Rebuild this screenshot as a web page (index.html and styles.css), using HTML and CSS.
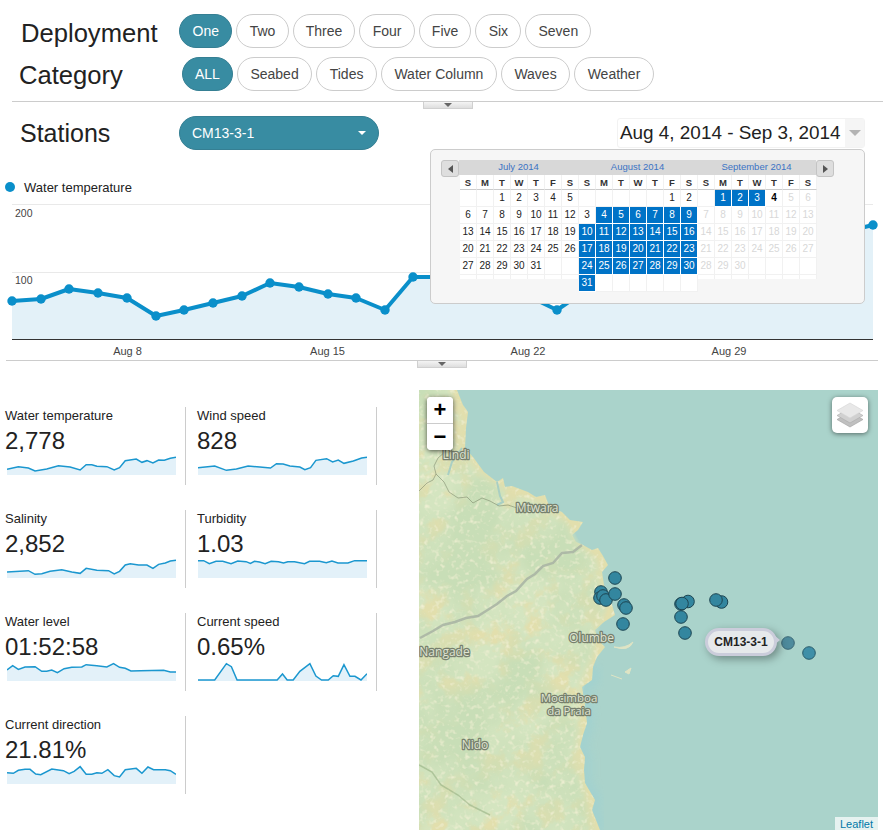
FILE: index.html
```html
<!DOCTYPE html>
<html lang="en">
<head>
<meta charset="utf-8">
<title>Deployment dashboard</title>
<link rel="stylesheet" href="styles.css">
</head>
<body>
<header class="filters">
  <div class="filter-row row-deploy">
    <h2 class="label label-deploy">Deployment</h2>
    <div class="pills">
      <button class="pill active">One</button><button class="pill">Two</button><button class="pill">Three</button><button class="pill">Four</button><button class="pill">Five</button><button class="pill">Six</button><button class="pill">Seven</button>
    </div>
  </div>
  <div class="filter-row row-cat">
    <h2 class="label label-cat">Category</h2>
    <div class="pills">
      <button class="pill active">ALL</button><button class="pill">Seabed</button><button class="pill">Tides</button><button class="pill">Water Column</button><button class="pill">Waves</button><button class="pill">Weather</button>
    </div>
  </div>
</header>
<div class="rule rule-top"></div>
<div class="handle handle-top"><i></i></div>
<section class="stations">
  <h2 class="label label-stations">Stations</h2>
  <div class="select"><span>CM13-3-1</span><i></i></div>
  <div class="range"><span>Aug 4, 2014 - Sep 3, 2014</span><b><i></i></b></div>
  <div class="calendar">
    <div class="cal-head">
      <div class="nav"><i class="left"></i></div>
      <div class="cal-titles"><span>July 2014</span><span>August 2014</span><span>September 2014</span></div>
      <div class="nav"><i class="right"></i></div>
    </div>
    <div class="cal-months">
      <div class="month">
        <div class="dn">S</div><div class="dn">M</div><div class="dn">T</div><div class="dn">W</div><div class="dn">T</div><div class="dn">F</div><div class="dn">S</div>
        <div class="d"></div><div class="d"></div><div class="d">1</div><div class="d">2</div><div class="d">3</div><div class="d">4</div><div class="d">5</div>
        <div class="d">6</div><div class="d">7</div><div class="d">8</div><div class="d">9</div><div class="d">10</div><div class="d">11</div><div class="d">12</div>
        <div class="d">13</div><div class="d">14</div><div class="d">15</div><div class="d">16</div><div class="d">17</div><div class="d">18</div><div class="d">19</div>
        <div class="d">20</div><div class="d">21</div><div class="d">22</div><div class="d">23</div><div class="d">24</div><div class="d">25</div><div class="d">26</div>
        <div class="d">27</div><div class="d">28</div><div class="d">29</div><div class="d">30</div><div class="d">31</div><div class="d"></div><div class="d"></div>
        <div class="d stub"></div><div class="d stub"></div><div class="d stub"></div><div class="d stub"></div><div class="d stub"></div><div class="d stub"></div><div class="d stub"></div>
      </div>
      <div class="month">
        <div class="dn">S</div><div class="dn">M</div><div class="dn">T</div><div class="dn">W</div><div class="dn">T</div><div class="dn">F</div><div class="dn">S</div>
        <div class="d"></div><div class="d"></div><div class="d"></div><div class="d"></div><div class="d"></div><div class="d">1</div><div class="d">2</div>
        <div class="d">3</div><div class="d on">4</div><div class="d on">5</div><div class="d on">6</div><div class="d on">7</div><div class="d on">8</div><div class="d on">9</div>
        <div class="d on">10</div><div class="d on">11</div><div class="d on">12</div><div class="d on">13</div><div class="d on">14</div><div class="d on">15</div><div class="d on">16</div>
        <div class="d on">17</div><div class="d on">18</div><div class="d on">19</div><div class="d on">20</div><div class="d on">21</div><div class="d on">22</div><div class="d on">23</div>
        <div class="d on">24</div><div class="d on">25</div><div class="d on">26</div><div class="d on">27</div><div class="d on">28</div><div class="d on">29</div><div class="d on">30</div>
        <div class="d on">31</div><div class="d"></div><div class="d"></div><div class="d"></div><div class="d"></div><div class="d"></div><div class="d"></div>
      </div>
      <div class="month">
        <div class="dn">S</div><div class="dn">M</div><div class="dn">T</div><div class="dn">W</div><div class="dn">T</div><div class="dn">F</div><div class="dn">S</div>
        <div class="d"></div><div class="d on">1</div><div class="d on">2</div><div class="d on">3</div><div class="d today">4</div><div class="d off">5</div><div class="d off">6</div>
        <div class="d off">7</div><div class="d off">8</div><div class="d off">9</div><div class="d off">10</div><div class="d off">11</div><div class="d off">12</div><div class="d off">13</div>
        <div class="d off">14</div><div class="d off">15</div><div class="d off">16</div><div class="d off">17</div><div class="d off">18</div><div class="d off">19</div><div class="d off">20</div>
        <div class="d off">21</div><div class="d off">22</div><div class="d off">23</div><div class="d off">24</div><div class="d off">25</div><div class="d off">26</div><div class="d off">27</div>
        <div class="d off">28</div><div class="d off">29</div><div class="d off">30</div><div class="d"></div><div class="d"></div><div class="d"></div><div class="d"></div>
        <div class="d stub"></div><div class="d stub"></div><div class="d stub"></div><div class="d stub"></div><div class="d stub"></div><div class="d stub"></div><div class="d stub"></div>
      </div>
    </div>
  </div>
</section>
<div class="legend"><i></i><span>Water temperature</span></div>
<svg class="chart" viewBox="0 196 889 164" width="889" height="164" role="img" aria-label="Water temperature chart">
  <line class="grid" x1="12" y1="204.5" x2="873" y2="204.5"/>
  <line class="grid" x1="12" y1="272.5" x2="873" y2="272.5"/>
  <path class="chart-area" d="M12 301L41 299L69 289L98 293L127 298L156 316L184 310L213 303L242 296L270 283L299 287L328 294L356 298L385 310L413 277L442 277L471 285L500 292L528 296L557 310L586 290L614 286L643 275L672 268L700 262L729 258L758 250L786 245L815 240L844 232L873 225L873 339L12 339Z"/>
  <path class="chart-line" d="M12 301L41 299L69 289L98 293L127 298L156 316L184 310L213 303L242 296L270 283L299 287L328 294L356 298L385 310L413 277L442 277L471 285L500 292L528 296L557 310L586 290L614 286L643 275L672 268L700 262L729 258L758 250L786 245L815 240L844 232L873 225"/>
  <g class="chart-dots">
    <circle cx="12" cy="301" r="4.700"/><circle cx="41" cy="299" r="4.700"/><circle cx="69" cy="289" r="4.700"/><circle cx="98" cy="293" r="4.700"/><circle cx="127" cy="298" r="4.700"/><circle cx="156" cy="316" r="4.700"/><circle cx="184" cy="310" r="4.700"/><circle cx="213" cy="303" r="4.700"/><circle cx="242" cy="296" r="4.700"/><circle cx="270" cy="283" r="4.700"/><circle cx="299" cy="287" r="4.700"/><circle cx="328" cy="294" r="4.700"/><circle cx="356" cy="298" r="4.700"/><circle cx="385" cy="310" r="4.700"/><circle cx="413" cy="277" r="4.700"/><circle cx="557" cy="310" r="4.700"/><circle cx="873" cy="225" r="4.700"/>
  </g>
  <line class="axis" x1="12" y1="339.5" x2="873" y2="339.5"/>
  <text class="tick" x="15" y="217">200</text>
  <text class="tick" x="15" y="284">100</text>
  <text class="tick tick-x mid" x="127.500" y="354.500">Aug 8</text>
  <text class="tick tick-x mid" x="327.500" y="354.500">Aug 15</text>
  <text class="tick tick-x mid" x="528" y="354.500">Aug 22</text>
  <text class="tick tick-x mid" x="729" y="354.500">Aug 29</text>
</svg>
<div class="rule rule-mid"></div>
<div class="handle handle-mid"><i></i></div>
<main class="lower">
  <div class="metrics">
    <article class="tile">
      <h3>Water temperature</h3><p>2,778</p>
      <svg class="spark" viewBox="21 180 506 60" preserveAspectRatio="none"><path class="spark-area" d="M21 223L55 215L85 219L105 228L140 222L175 212L210 216L240 225L258 209L275 209L290 214L320 215L342 225L358 218L375 197L408 192L425 202L440 197L458 204L475 195L492 196L510 190L527 187L527 240L21 240Z"/><path class="spark-line" d="M21 223L55 215L85 219L105 228L140 222L175 212L210 216L240 225L258 209L275 209L290 214L320 215L342 225L358 218L375 197L408 192L425 202L440 197L458 204L475 195L492 196L510 190L527 187"/></svg>
    </article>
    <article class="tile">
      <h3>Wind speed</h3><p>828</p>
      <svg class="spark" viewBox="21 180 506 60" preserveAspectRatio="none"><path class="spark-area" d="M21 218L71 213L106 226L136 222L171 213L206 216L238 219L256 206L276 207L296 213L326 216L341 224L358 218L374 196L406 191L424 201L441 195L458 205L486 198L511 189L527 187L527 240L21 240Z"/><path class="spark-line" d="M21 218L71 213L106 226L136 222L171 213L206 216L238 219L256 206L276 207L296 213L326 216L341 224L358 218L374 196L406 191L424 201L441 195L458 205L486 198L511 189L527 187"/></svg>
    </article>
    <article class="tile">
      <h3>Salinity</h3><p>2,852</p>
      <svg class="spark" viewBox="21 180 506 60" preserveAspectRatio="none"><path class="spark-area" d="M21 222L85 218L105 229L125 227L150 220L185 215L215 222L240 226L258 211L290 217L325 218L342 228L358 220L375 201L390 197L415 201L440 201L458 211L475 199L495 195L510 189L527 187L527 240L21 240Z"/><path class="spark-line" d="M21 222L85 218L105 229L125 227L150 220L185 215L215 222L240 226L258 211L290 217L325 218L342 228L358 220L375 201L390 197L415 201L440 201L458 211L475 199L495 195L510 189L527 187"/></svg>
    </article>
    <article class="tile">
      <h3>Turbidity</h3><p>1.03</p>
      <svg class="spark" viewBox="21 180 506 60" preserveAspectRatio="none"><path class="spark-area" d="M21 188L38 188L55 197L75 190L95 190L120 197L140 189L165 191L178 196L190 190L205 192L222 197L240 190L262 191L277 195L290 191L310 191L340 197L355 190L385 190L405 194L422 189L440 195L470 195L490 188L527 188L527 240L21 240Z"/><path class="spark-line" d="M21 188L38 188L55 197L75 190L95 190L120 197L140 189L165 191L178 196L190 190L205 192L222 197L240 190L262 191L277 195L290 191L310 191L340 197L355 190L385 190L405 194L422 189L440 195L470 195L490 188L527 188"/></svg>
    </article>
    <article class="tile">
      <h3>Water level</h3><p>01:52:58</p>
      <svg class="spark" viewBox="21 180 506 60" preserveAspectRatio="none"><path class="spark-area" d="M21 207L38 194L55 205L75 198L105 197L125 211L140 211L155 207L172 215L192 203L215 199L245 198L258 191L290 194L320 198L340 188L358 199L375 202L392 210L420 209L490 208L510 213L527 213L527 240L21 240Z"/><path class="spark-line" d="M21 207L38 194L55 205L75 198L105 197L125 211L140 211L155 207L172 215L192 203L215 199L245 198L258 191L290 194L320 198L340 188L358 199L375 202L392 210L420 209L490 208L510 213L527 213"/></svg>
    </article>
    <article class="tile">
      <h3>Current speed</h3><p>0.65%</p>
      <svg class="spark" viewBox="21 180 506 60" preserveAspectRatio="none"><path class="spark-area" d="M21 237L71 237L106 188L121 197L138 237L258 237L274 219L288 237L306 237L326 211L356 188L374 225L391 237L411 237L426 224L441 226L458 191L476 226L491 226L509 237L527 218L527 240L21 240Z"/><path class="spark-line" d="M21 237L71 237L106 188L121 197L138 237L258 237L274 219L288 237L306 237L326 211L356 188L374 225L391 237L411 237L426 224L441 226L458 191L476 226L491 226L509 237L527 218"/></svg>
    </article>
    <article class="tile">
      <h3>Current direction</h3><p>21.81%</p>
      <svg class="spark" viewBox="21 180 506 60" preserveAspectRatio="none"><path class="spark-area" d="M21 206L40 208L55 199L75 196L90 196L107 210L122 212L155 195L190 200L207 209L222 202L240 188L258 211L275 211L290 206L305 208L323 197L342 215L358 219L375 197L408 193L425 208L443 189L460 197L495 197L510 200L527 211L527 240L21 240Z"/><path class="spark-line" d="M21 206L40 208L55 199L75 196L90 196L107 210L122 212L155 195L190 200L207 209L222 202L240 188L258 211L275 211L290 206L305 208L323 197L342 215L358 219L375 197L408 193L425 208L443 189L460 197L495 197L510 200L527 211"/></svg>
    </article>
  </div>
  <div class="map">
    <svg class="map-canvas" viewBox="419 390 459 440" width="459" height="440" role="img" aria-label="Map of stations">
      <defs>
        <filter id="terrain" filterUnits="userSpaceOnUse" x="300" y="290" width="400" height="660">
          <feGaussianBlur in="SourceAlpha" stdDeviation="11" result="blurred"/>
          <feColorMatrix in="blurred" values="0 0 0 0 0  0 0 0 0 0  0 0 0 0 0  0 0 0 3.2 -1.75" result="inland"/>
          <feTurbulence type="fractalNoise" baseFrequency="0.04" numOctaves="5" seed="4" result="noiseA"/>
          <feColorMatrix in="noiseA" values="0 0 0 0 0.66  0 0 0 0 0.78  0 0 0 0 0.53  5.5 0 0 0 -1.9" result="green"/>
          <feComposite in="green" in2="inland" operator="in" result="greenInland"/>
          <feTurbulence type="fractalNoise" baseFrequency="0.012" numOctaves="4" seed="19" result="noiseB"/>
          <feColorMatrix in="noiseB" values="0 0 0 0 0.58  0 0 0 0 0.73  0 0 0 0 0.47  4 0 0 0 -1.6" result="deep"/>
          <feComposite in="deep" in2="inland" operator="in" result="deepInland"/>
          <feTurbulence type="fractalNoise" baseFrequency="0.2" numOctaves="2" seed="7" result="noiseC"/>
          <feColorMatrix in="noiseC" values="0 0 0 0 0.88  0 0 0 0 0.87  0 0 0 0 0.66  2.5 0 0 0 -1.35" result="speck"/>
          <feComposite in="speck" in2="SourceAlpha" operator="in" result="speckLand"/>
          <feMerge><feMergeNode in="SourceGraphic"/><feMergeNode in="greenInland"/><feMergeNode in="deepInland"/><feMergeNode in="speckLand"/></feMerge>
        </filter>
        <filter id="soft" x="-20%" y="-20%" width="140%" height="140%"><feGaussianBlur stdDeviation="4"/></filter>
      </defs>
      <rect class="sea" x="419" y="390" width="459" height="440"/>
      <path class="shallow" filter="url(#soft)" d="M593 667L592 680L582 687L587 723L580 747L585 757L585 783L595 800L592 810L600 830"/>
      <path class="land" filter="url(#terrain)" d="M300 290L445 290L457 390L463 405L468 412L466 428L465 448L473 457L484 472L497 482L503 478L505 487L512 486L528 492L536 497L545 495L548 503L552 508L562 512L570 520L583 522L578 530L572 535L576 542L583 545L592 550L598 548L603 556L608 565L602 572L604 585L612 605L615 615L604 622L595 630L598 640L605 647L597 657L593 667L592 680L582 687L585 705L587 723L583 735L580 747L585 757L584 770L585 783L595 800L592 810L600 830L602 950L300 950Z"/>
      <path class="lagoon" d="M497 482L500 496L503 502L497 505M462 448L452 462L448 475"/>
      <path class="river" d="M582 545L573 552L562 553L553 563L543 566L535 574L527 579L516 591L507 596L497 604L486 611L478 616L466 618L455 622L443 625L433 631L420 638"/>
      <path class="border" d="M419 491L427 483L433 480L436 474L444 482L449 492L458 498L467 497L473 503L482 498L490 501L499 506L508 505L520 509L530 507"/>
      <path class="border" d="M436 474L434 466L438 458L445 452L448 442"/>
      <path class="ridge" d="M419 765L432 772L441 785L458 795L470 805L490 815"/>
      <path class="island" d="M614 647Q625 649 633 642Q629 652 614 647ZM611 675L622 679M625 672L631 668L629 674Z"/>
      <text class="place" x="456" y="459">Lindi</text>
      <text class="place" x="537" y="512">Mtwara</text>
      <text class="place" x="591.500" y="642">Olumbe</text>
      <text class="place" x="444.500" y="656">Nangade</text>
      <text class="place place-long" x="569" y="701.500">Mocimboa</text>
      <text class="place place-long" x="569" y="714.500">da Praia</text>
      <text class="place" x="475" y="749">Nido</text>
      <g class="markers">
        <circle cx="615" cy="578" r="6.300"/><circle cx="601" cy="592" r="6.300"/><circle cx="600" cy="598" r="6.300"/><circle cx="603" cy="596" r="6.300"/><circle cx="606" cy="600" r="6.300"/><circle cx="615" cy="594" r="6.300"/><circle cx="624" cy="605" r="6.300"/><circle cx="626" cy="608" r="6.300"/><circle cx="623" cy="624" r="6.300"/><circle cx="688" cy="601.500" r="6.300"/><circle cx="681" cy="604" r="6.300"/><circle cx="682" cy="603.500" r="6.300"/><circle cx="681" cy="617" r="6.300"/><circle cx="685" cy="633" r="6.300"/><circle cx="721.500" cy="602" r="6.300"/><circle cx="716" cy="600" r="6.300"/><circle class="dim" cx="788" cy="643" r="6.300"/><circle class="dim2" cx="809" cy="653" r="6.300"/>
      </g>
    </svg>
    <div class="zoom">
      <button>+</button>
      <button>&#8722;</button>
    </div>
    <div class="layers">
      <svg viewBox="0 0 26 26" width="26" height="26">
        <path class="layer-low" d="M13 10L26 17.500L13 25L0 17.500Z"/>
        <path class="layer-mid" d="M13 6L26 13.500L13 21L0 13.500Z"/>
        <path class="layer-top" d="M13 1L26 8.500L13 16L0 8.500Z"/>
      </svg>
    </div>
    <div class="tip">CM13-3-1</div>
    <div class="attr">Leaflet</div>
  </div>
</main>
</body>
</html>
```
FILE: styles.css
```css
* { box-sizing: border-box; }
html, body { margin: 0; padding: 0; }
body {
  width: 889px;
  height: 840px;
  overflow: hidden;
  background: #fff;
  color: #222;
  font-family: "Liberation Sans", Arial, sans-serif;
}
.filters { display: flex; flex-direction: column; }
.filter-row { display: flex; align-items: center; height: 34px; }
.row-deploy { margin-top: 14px; }
.row-cat { margin-top: 9px; }
.label { margin: 0; font-weight: 400; font-size: 25.6px; line-height: 34px; color: #222; }
.label-deploy { padding: 3px 0 0 21px; width: 179px; }
.label-cat { padding: 2px 0 0 19px; width: 182px; }
.label-stations { padding: 0 0 0 20px; width: 179px; font-size: 25px; }
.pills { display: flex; gap: 4px; }
.pill {
  height: 34px;
  padding: 0 12.5px;
  background: #fff;
  border: 1px solid #ccc;
  border-radius: 17px;
  font: 14px/20px "Liberation Sans", Arial, sans-serif;
  color: #444;
}
.row-deploy .pill { padding: 0 12.2px; }
.pill.active, .row-deploy .pill.active {
  padding: 0 12.5px;
  background: #388ca2;
  border-color: #357f93;
  color: #fff;
}
.row-cat .pill.active { padding: 0 12px; }
.rule { height: 1px; background: #ccc; }
.rule-top { margin: 10px 6px 0 12px; }
.rule-mid { margin: 0 11px 0 6px; }
.handle {
  display: flex;
  justify-content: center;
  width: 50px;
  height: 7px;
  background: linear-gradient(#f4f4f4, #dedede);
  border: 1px solid #d0d0d0;
  border-top: 0;
}
.handle i {
  width: 0;
  height: 0;
  margin-top: 1px;
  border-left: 4px solid transparent;
  border-right: 4px solid transparent;
  border-top: 4px solid #666;
}
.handle-top { margin-left: 423px; }
.handle-mid { margin-left: 417px; }
.stations { position: relative; display: flex; align-items: flex-start; margin-top: 7px; height: 34px; }
.select {
  display: flex;
  align-items: center;
  justify-content: space-between;
  width: 200px;
  height: 34px;
  padding: 0 12px;
  background: #388ca2;
  border: 1px solid #357f93;
  border-radius: 17px;
  font-size: 14px;
  color: #fff;
}
.select i {
  width: 0;
  height: 0;
  border-left: 4px solid transparent;
  border-right: 4px solid transparent;
  border-top: 4px solid #fff;
}
.range {
  display: flex;
  align-items: stretch;
  justify-content: space-between;
  width: 248px;
  height: 30px;
  margin: 2px 24px 0 auto;
  padding-left: 2px;
  border: 1px solid #f2f2f2;
  border-radius: 3px;
  font-size: 18.900px;
  line-height: 28px;
  white-space: nowrap;
  color: #222;
}
.range b {
  display: flex;
  align-items: center;
  justify-content: center;
  width: 19px;
  background: #f5f5f5;
}
.range i {
  width: 0;
  height: 0;
  border-left: 6px solid transparent;
  border-right: 6px solid transparent;
  border-top: 6px solid #b3b3b3;
}
.calendar {
  position: absolute;
  left: 430px;
  top: 33px;
  z-index: 5;
  width: 435px;
  height: 155px;
  padding: 10px 10px 0;
  background: #f6f6f6;
  border: 1px solid #ccc;
  border-radius: 5px;
}
.cal-head { display: flex; align-items: flex-start; width: 393px; }
.nav {
  display: flex;
  align-items: center;
  justify-content: center;
  flex: none;
  width: 18px;
  height: 17px;
  background: #dedede;
  border: 1px solid #c4c4c4;
  border-radius: 3px;
  position: relative;
  z-index: 1;
}
.nav i { width: 0; height: 0; border-top: 4px solid transparent; border-bottom: 4px solid transparent; }
.nav .left { border-right: 5px solid #555; }
.nav .right { border-left: 5px solid #555; }
.cal-titles {
  display: grid;
  grid-template-columns: repeat(3, 119px);
  flex: none;
  width: 357px;
  height: 15px;
  background: #d8d8d8;
  font-size: 9.500px;
  line-height: 14px;
  text-align: center;
  color: #3b73c4;
}
.cal-months { display: flex; margin: -2px 0 0 19px; }
.month { display: grid; grid-template-columns: repeat(7, 17px); grid-template-rows: 15px; grid-auto-rows: 17px; width: 119px; align-content: start; }
.month .dn {
  height: 15px;
  background: #fff;
  border-right: 1px solid #f1f1f1;
  border-bottom: 1px solid #ccc;
  font-size: 9.500px;
  font-weight: 700;
  line-height: 15px;
  text-align: center;
  color: #333;
}
.d {
  background: #fff;
  border-right: 1px solid #f1f1f1;
  border-bottom: 1px solid #f1f1f1;
  font-size: 10px;
  line-height: 16px;
  text-align: center;
  color: #222;
}
.d.on { background: #0073c7; border-color: #fff; color: #fff; }
.d.off { color: #d8d8d8; }
.d.today { font-weight: 700; color: #000; }
.d.stub { height: 4px; border-bottom: 0; }
.legend {
  display: flex;
  align-items: center;
  gap: 9px;
  height: 16px;
  margin: 29px 0 0 5px;
  font-size: 13px;
  color: #222;
}
.legend i { width: 10px; height: 10px; border-radius: 50%; background: #0a8fca; }
.chart { display: block; margin-top: 1px; }
.grid { stroke: #e9e9e9; stroke-width: 1; }
.axis { stroke: #333; stroke-width: 1; }
.chart-area { fill: #e3f1f8; }
.chart-line { fill: none; stroke: #0a8fca; stroke-width: 4; stroke-linejoin: round; }
.chart-dots circle { fill: #0a8fca; }
.tick { font: 10.500px "Liberation Sans", Arial, sans-serif; fill: #444; }
.tick-x { font-size: 11px; }
.mid { text-anchor: middle; }
.lower { display: flex; margin-top: 22px; }
.metrics {
  display: grid;
  grid-template-columns: 186px 185px;
  grid-auto-rows: 78px;
  column-gap: 6px;
  row-gap: 25px;
  align-content: start;
  width: 419px;
  padding: 17px 0 0 0;
}
.tile { padding-left: 5px; border-right: 1px solid #ccc; }
.tile h3 { margin: 2px 0 0; font-size: 13px; font-weight: 400; line-height: 14px; color: #222; }
.tile p { margin: 4px 0 0; font-size: 24px; line-height: 28px; color: #222; }
.spark { display: block; width: 169px; height: 20px; margin: 0 0 0 2px; overflow: hidden; }
.tile:nth-child(even) .spark { margin-left: 1px; }
.spark-area { fill: #e3f1f9; }
.spark-line { fill: none; stroke: #1b97cf; stroke-width: 4.500; }
.map { position: relative; width: 459px; height: 440px; overflow: hidden; }
.map-canvas { display: block; }
.sea { fill: #aad3cb; }
.shallow { fill: none; stroke: #9fd1d2; stroke-width: 12; opacity: .7; }
.land { fill: #e2dfad; }
.lagoon { fill: none; stroke: #a9cfc3; stroke-width: 2; }
.river { fill: none; stroke: #aab5a4; stroke-width: 2.500; opacity: .9; }
.border { fill: none; stroke: #7a8568; stroke-width: .7; opacity: .8; }
.ridge { fill: none; stroke: #8ca878; stroke-width: 1.500; opacity: .5; }
.island { fill: #dfe4c4; stroke: #dfe4c4; stroke-width: 1; }
.place {
  font: 12px "Open Sans", "Liberation Sans", sans-serif;
  text-anchor: middle;
  fill: #dfe3d2;
  stroke: #77806d;
  stroke-width: 2.500;
  paint-order: stroke;
  stroke-linejoin: round;
}
.place-long { font-size: 11.500px; }
.markers circle { fill: #33869f; stroke: #1d4552; stroke-width: 1; }
.markers .dim { fill: #4e8b9d; stroke: #3c6876; }
.markers .dim2 { fill: #3f8fa8; stroke: #2a5c6b; }
.zoom {
  position: absolute;
  left: 8px;
  top: 7px;
  width: 26px;
  height: 53px;
  background: #fff;
  border-radius: 4px;
  box-shadow: 0 1px 5px rgba(0, 0, 0, .65);
  overflow: hidden;
}
.zoom button {
  display: block;
  width: 26px;
  height: 27px;
  padding: 0;
  background: #fff;
  border: 0;
  border-bottom: 1px solid #ccc;
  font: 700 22px/26px "Liberation Sans", Arial, sans-serif;
  color: #000;
}
.zoom button:last-child { height: 26px; border-bottom: 0; }
.layers {
  display: flex;
  align-items: center;
  justify-content: center;
  position: absolute;
  right: 10px;
  top: 7px;
  width: 36px;
  height: 36px;
  background: #fff;
  border-radius: 5px;
  box-shadow: 0 1px 5px rgba(0, 0, 0, .5);
}
.layer-top { fill: #e8e8e8; stroke: #d4d4d4; stroke-width: .6; }
.layer-mid { fill: #d0d0d0; stroke: #aaa; stroke-width: .6; }
.layer-low { fill: #c0c0c0; stroke: #a0a0a0; stroke-width: .6; }
.tip {
  position: absolute;
  left: 286px;
  top: 238px;
  width: 72px;
  height: 28px;
  background: #e6e9eb;
  border: 3px solid #cbcddb;
  border-radius: 14px;
  box-shadow: 3px 3px 8px rgba(0, 0, 0, .35);
  font-size: 12px;
  font-weight: 700;
  line-height: 22px;
  text-align: center;
  color: #222;
}
.tip::after {
  content: "";
  position: absolute;
  left: 66px;
  top: 4px;
  width: 0;
  height: 0;
  border-top: 5px solid transparent;
  border-bottom: 5px solid transparent;
  border-left: 6px solid #cbcddb;
}
.attr {
  position: absolute;
  right: 0;
  bottom: 0;
  height: 13px;
  padding: 0 5px;
  background: rgba(255, 255, 255, .7);
  font-size: 11px;
  line-height: 14px;
  color: #0078a8;
}
```
